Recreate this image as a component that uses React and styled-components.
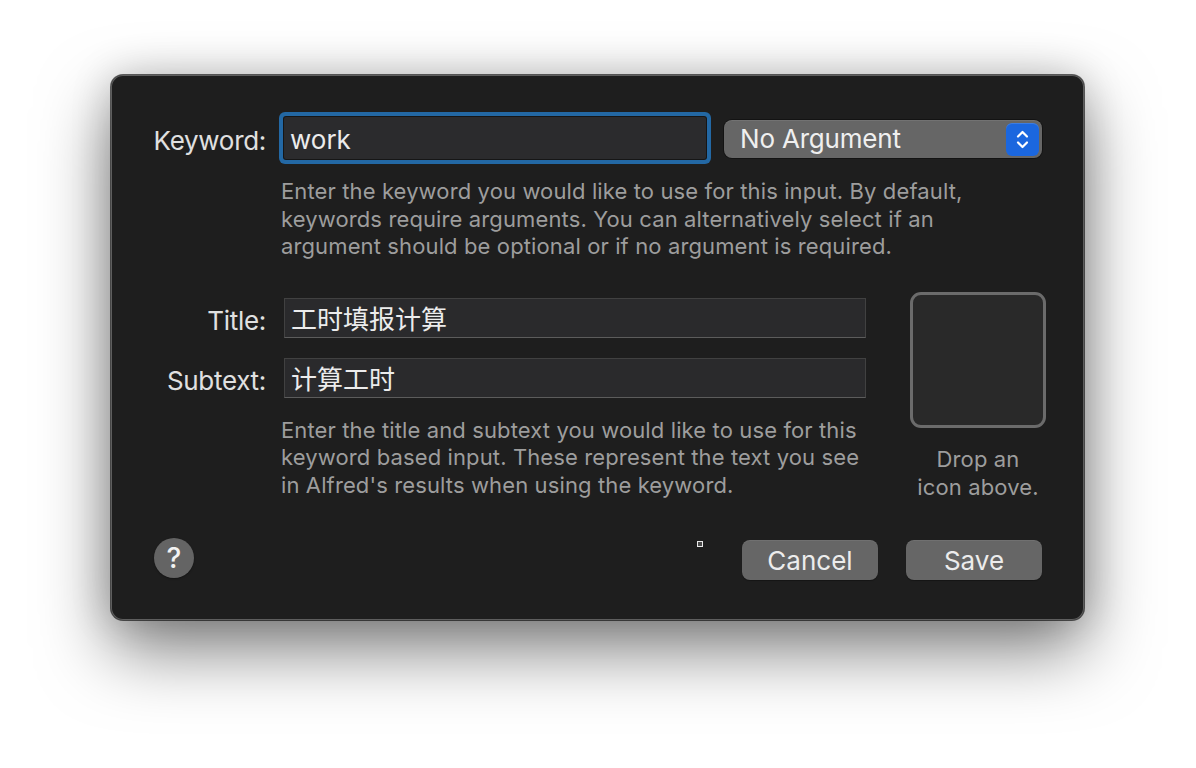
import React from "react";
import styled, { createGlobalStyle } from "styled-components";

const GlobalStyle = createGlobalStyle`
  html, body { margin: 0; padding: 0; background: #ffffff; }
  body { font-family: Inter, "Noto Sans CJK SC", sans-serif; -webkit-font-smoothing: antialiased; }
  * { box-sizing: border-box; }
`;

const Page = styled.div`
  width: 1196px;
  height: 768px;
  padding: 75px 0 0 111px;
  overflow: hidden;
  background: #ffffff;
`;

const Window = styled.div`
  position: relative;
  width: 973px;
  height: 545px;
  background: #1e1e1e;
  border-radius: 12px;
  padding: 42px 38px 40px 21px;
  display: flex;
  flex-direction: column;
  box-shadow: inset 0 0 0 1px #5e5e5e, 0 0 0 1px rgba(0, 0, 0, 0.6),
    0 30px 70px rgba(0, 0, 0, 0.5), 0 0 40px rgba(0, 0, 0, 0.18);
`;

const Row = styled.div`
  display: flex;
  align-items: flex-start;
  margin-top: ${(p) => p.$mt || 0}px;
`;

const Label = styled.div`
  width: 134px;
  margin-right: 18px;
  flex: none;
  text-align: right;
  font-size: 26px;
  letter-spacing: -0.3px;
  color: #e0e0e0;
  height: ${(p) => p.$h}px;
  line-height: ${(p) => p.$h}px;
  padding-top: 3px;
  white-space: nowrap;
`;

const KeywordField = styled.div`
  width: 422px;
  height: 42px;
  flex: none;
  background: #2b2b2d;
  border-radius: 2px;
  box-shadow: 0 0 0 1px #161616, 0 0 0 5px #2368a4;
  font-size: 26px;
  color: #ececec;
  padding: 3px 0 0 6px;
  line-height: 40px;
`;

const Select = styled.div`
  margin-left: 18px;
  margin-top: 3px;
  width: 318px;
  height: 38px;
  flex: none;
  background: #666666;
  border-radius: 8px;
  display: flex;
  align-items: center;
  padding: 0 3px 0 16px;
  font-size: 26px;
  color: #efefef;
  box-shadow: inset 0 1px 0 rgba(255, 255, 255, 0.08), 0 0 0 1px rgba(0, 0, 0, 0.35);
`;

const SelectText = styled.span`
  flex: 1;
  line-height: 38px;
  letter-spacing: -0.2px;
`;

const Stepper = styled.div`
  width: 33px;
  height: 33px;
  border-radius: 6px;
  background: #1b67df;
  display: flex;
  align-items: center;
  justify-content: center;
  box-shadow: inset 0 1px 0 rgba(255, 255, 255, 0.15);
`;

const HelpText = styled.p`
  margin: ${(p) => p.$mt}px 0 0 149px;
  font-size: 22px;
  line-height: 27.5px;
  letter-spacing: 0.12px;
  color: #9d9d9d;
  white-space: nowrap;
`;

const Main = styled.div`
  display: flex;
  gap: 44px;
  margin-top: 31px;
`;

const LeftCol = styled.div`
  width: 734px;
  padding-top: 6px;
  display: flex;
  flex-direction: column;
`;

const TextField = styled.div`
  width: 582px;
  height: 40px;
  flex: none;
  background: #2a2a2c;
  border: 1px solid #414141;
  border-bottom-color: #5c5c5c;
  font-size: 26px;
  color: #ececec;
  padding-left: 6px;
  line-height: 38px;
  font-family: "Noto Sans CJK SC", Inter, sans-serif;
`;

const IconCol = styled.div`
  width: 136px;
  display: flex;
  flex-direction: column;
  align-items: center;
`;

const IconWell = styled.div`
  width: 136px;
  height: 136px;
  border: 3px solid #6b6b6b;
  border-radius: 11px;
  background: #292929;
`;

const Caption = styled.div`
  margin-top: 17px;
  font-size: 22px;
  line-height: 28px;
  letter-spacing: 0.12px;
  color: #9d9d9d;
  text-align: center;
  white-space: nowrap;
`;

const Footer = styled.div`
  margin-top: auto;
  display: flex;
  align-items: flex-end;
  padding-right: 4px;
`;

const HelpButton = styled.div`
  margin-left: 22px;
  margin-bottom: 2px;
  width: 40px;
  height: 40px;
  border-radius: 50%;
  background: #646464;
  color: #f2f2f2;
  font-size: 28px;
  font-weight: 500;
  display: flex;
  align-items: center;
  justify-content: center;
  box-shadow: 0 1px 2px rgba(0, 0, 0, 0.35);
`;

const Button = styled.div`
  margin-left: ${(p) => (p.$first ? "auto" : "28px")};
  width: 136px;
  height: 40px;
  border-radius: 8px;
  background: #666666;
  color: #ececec;
  font-size: 26px;
  display: flex;
  align-items: center;
  justify-content: center;
  box-shadow: inset 0 1px 0 rgba(255, 255, 255, 0.07), 0 1px 1px rgba(0, 0, 0, 0.3);
`;

const Marker = styled.span`
  position: absolute;
  left: 586px;
  top: 466px;
  width: 6px;
  height: 6px;
  border: 1px solid #e8e8e8;
  background: #4a4a4a;
`;

function Chevrons() {
  return (
    <svg width="33" height="33" viewBox="0 0 33 33" fill="none">
      <path d="M12 13.5 L16.5 9 L21 13.5" stroke="#fff" strokeWidth="2.2" strokeLinecap="round" strokeLinejoin="round" />
      <path d="M12 19.5 L16.5 24 L21 19.5" stroke="#fff" strokeWidth="2.2" strokeLinecap="round" strokeLinejoin="round" />
    </svg>
  );
}

export default function App() {
  return (
    <>
      <GlobalStyle />
      <Page>
        <Window>
          <Row>
            <Label $h={42}>Keyword:</Label>
            <KeywordField>work</KeywordField>
            <Select>
              <SelectText>No Argument</SelectText>
              <Stepper>
                <Chevrons />
              </Stepper>
            </Select>
          </Row>
          <HelpText $mt={19}>
            Enter the keyword you would like to use for this input. By default,
            <br />
            keywords require arguments. You can alternatively select if an
            <br />
            argument should be optional or if no argument is required.
          </HelpText>
          <Main>
            <LeftCol>
              <Row>
                <Label $h={40}>Title:</Label>
                <TextField>工时填报计算</TextField>
              </Row>
              <Row $mt={20}>
                <Label $h={40}>Subtext:</Label>
                <TextField>计算工时</TextField>
              </Row>
              <HelpText $mt={19}>
                Enter the title and subtext you would like to use for this
                <br />
                keyword based input. These represent the text you see
                <br />
                in Alfred's results when using the keyword.
              </HelpText>
            </LeftCol>
            <IconCol>
              <IconWell />
              <Caption>
                Drop an
                <br />
                icon above.
              </Caption>
            </IconCol>
          </Main>
          <Footer>
            <HelpButton>?</HelpButton>
            <Button $first>Cancel</Button>
            <Button>Save</Button>
          </Footer>
          <Marker />
        </Window>
      </Page>
    </>
  );
}
